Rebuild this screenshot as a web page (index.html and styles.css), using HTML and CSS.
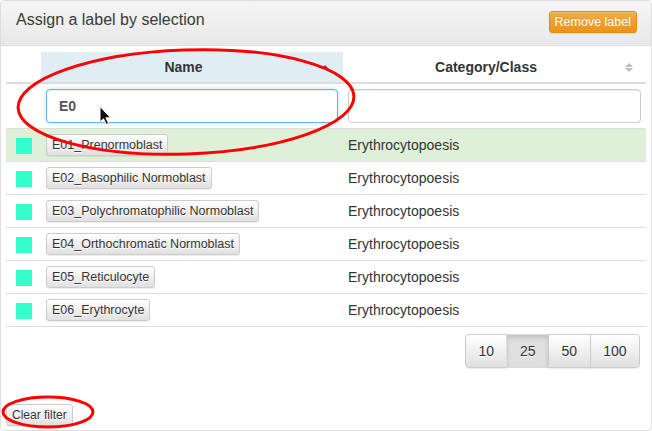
FILE: index.html
```html
<!DOCTYPE html>
<html>
<head>
<meta charset="utf-8">
<link rel="stylesheet" href="styles.css">
</head>
<body>
<div class="panel">
  <div class="panel-heading">
    <h3 class="panel-title">Assign a label by selection</h3>
    <button class="btn btn-xs btn-warning">Remove label</button>
  </div>
  <div class="panel-body">
    <table class="labels">
      <colgroup>
        <col class="w-color">
        <col class="w-name">
        <col class="w-cat">
      </colgroup>
      <thead>
        <tr class="head-row">
          <th class="col-color"></th>
          <th class="col-name sorted">Name<span class="sort-up"></span></th>
          <th class="col-cat">Category/Class<span class="sort-both"><i class="up"></i><i class="down"></i></span></th>
        </tr>
        <tr class="filter-row">
          <td></td>
          <td><input class="form-control focused" type="text" value="E0"></td>
          <td><input class="form-control" type="text" value=""></td>
        </tr>
      </thead>
      <tbody>
        <tr class="success"><td class="cc"><span class="swatch"></span></td><td><button class="btn btn-xs btn-default lbl">E01_Prenormoblast</button></td><td>Erythrocytopoesis</td></tr>
        <tr><td class="cc"><span class="swatch"></span></td><td><button class="btn btn-xs btn-default lbl">E02_Basophilic Normoblast</button></td><td>Erythrocytopoesis</td></tr>
        <tr><td class="cc"><span class="swatch"></span></td><td><button class="btn btn-xs btn-default lbl">E03_Polychromatophilic Normoblast</button></td><td>Erythrocytopoesis</td></tr>
        <tr><td class="cc"><span class="swatch"></span></td><td><button class="btn btn-xs btn-default lbl">E04_Orthochromatic Normoblast</button></td><td>Erythrocytopoesis</td></tr>
        <tr><td class="cc"><span class="swatch"></span></td><td><button class="btn btn-xs btn-default lbl">E05_Reticulocyte</button></td><td>Erythrocytopoesis</td></tr>
        <tr><td class="cc"><span class="swatch"></span></td><td><button class="btn btn-xs btn-default lbl">E06_Erythrocyte</button></td><td>Erythrocytopoesis</td></tr>
      </tbody>
    </table>
    <div class="pager-wrap">
      <div class="btn-group">
        <button class="btn btn-default">10</button><button class="btn btn-default active">25</button><button class="btn btn-default">50</button><button class="btn btn-default">100</button>
      </div>
    </div>
    <div class="footer-row">
      <button class="btn btn-xs btn-default">Clear filter</button>
    </div>
  </div>
</div>
<svg class="overlay" width="652" height="431" viewBox="0 0 652 431">
  <ellipse cx="186" cy="102" rx="168" ry="52" fill="none" stroke="#ff0000" stroke-width="3" transform="rotate(-2 186 102)"/>
  <ellipse cx="48" cy="412" rx="45" ry="15" fill="none" stroke="#ff0000" stroke-width="3"/>
  <path d="M100 106.5 L100 122 L103.5 118.8 L106.3 124.5 L108.6 123.4 L105.9 117.8 L110.6 117.8 Z" fill="#111" stroke="#fff" stroke-width="1" stroke-linejoin="round"/>
</svg>
</body>
</html>
```

FILE: styles.css
```css
html, body {
  margin: 0;
  padding: 0;
  background: #fff;
}
body {
  font-family: "Liberation Sans", Arial, sans-serif;
  font-size: 14px;
  line-height: 20px;
  color: #333;
  width: 652px;
  height: 431px;
  position: relative;
  overflow: hidden;
}
.panel {
  box-sizing: border-box;
  width: 652px;
  height: 431px;
  border: 1px solid #ddd;
  border-radius: 4px;
  display: flex;
  flex-direction: column;
}
.panel-heading {
  display: flex;
  justify-content: space-between;
  align-items: flex-start;
  padding: 10px 14px 10px 15px;
  height: 24px;
  background: linear-gradient(#f5f5f5, #e8e8e8);
  border-bottom: 1px solid #ddd;
  border-radius: 3px 3px 0 0;
}
.panel-title {
  margin: 0;
  font-size: 16px;
  font-weight: normal;
  line-height: 18px;
  color: #3a3a3a;
}
.panel-body {
  flex: 1;
  display: flex;
  flex-direction: column;
  padding: 6px 5px 4px 5px;
}
.btn {
  font-family: "Liberation Sans", Arial, sans-serif;
  display: inline-block;
  border: 1px solid #ccc;
  border-radius: 4px;
  cursor: pointer;
  margin: 0;
}
.btn-xs {
  font-size: 12px;
  line-height: 18px;
  padding: 1px 5px;
  border-radius: 3px;
  height: 22px;
}
.btn-xs.lbl {
  font-size: 12.5px;
}
.btn-warning {
  font-size: 12.5px;
  color: #fff;
  background: linear-gradient(#f0ad4e, #eb9316);
  border-color: #e38d13;
  box-shadow: inset 0 1px 0 rgba(255,255,255,.15), 0 1px 1px rgba(0,0,0,.075);
  text-shadow: 0 -1px 0 rgba(0,0,0,.1);
}
.btn-default {
  color: #333;
  background: linear-gradient(#fff, #e0e0e0);
  border-color: #ccc;
  box-shadow: inset 0 1px 0 rgba(255,255,255,.15), 0 1px 1px rgba(0,0,0,.075);
  text-shadow: 0 1px 0 #fff;
}
.labels {
  width: 640px;
  border-collapse: collapse;
  table-layout: fixed;
}
.w-color { width: 35px; }
.w-name { width: 302px; }
.w-cat { width: 303px; }
.labels th, .labels td {
  padding: 5px;
  text-align: left;
  vertical-align: middle;
}
.head-row th {
  position: relative;
  font-weight: bold;
  text-align: center;
  padding: 5px 22px 5px 5px;
  border-bottom: 2px solid #ddd;
}
.head-row th.col-color { padding: 5px; }
.head-row th.sorted {
  background: #e1edf5;
}
.sort-up {
  position: absolute;
  right: 14px;
  top: 13px;
  width: 0;
  height: 0;
  border-left: 4px solid transparent;
  border-right: 4px solid transparent;
  border-bottom: 4px solid #555;
}
.sort-both {
  position: absolute;
  right: 13px;
  top: 11px;
  width: 8px;
  height: 10px;
}
.sort-both i {
  display: block;
  width: 0;
  height: 0;
  border-left: 4px solid transparent;
  border-right: 4px solid transparent;
}
.sort-both .up { border-bottom: 4px solid #bbb; margin-bottom: 1px; }
.sort-both .down { border-top: 4px solid #bbb; }
.filter-row td {
  border-bottom: 1px solid #ddd;
}
.form-control {
  box-sizing: border-box;
  width: 100%;
  height: 34px;
  padding: 6px 12px;
  font-family: "Liberation Sans", Arial, sans-serif;
  font-size: 14px;
  font-weight: bold;
  color: #555;
  border: 1px solid #ccc;
  border-radius: 4px;
  box-shadow: inset 0 1px 1px rgba(0,0,0,.075);
  outline: none;
  display: block;
}
.form-control.focused {
  border-color: #66afe9;
  box-shadow: inset 0 1px 1px rgba(0,0,0,.075), 0 0 5px rgba(102,175,233,.4);
}
tbody td {
  border-bottom: 1px solid #ddd;
  height: 22px;
}
tbody tr.success td {
  background: #dff0d8;
}
.labels td.cc { text-align: left; padding-left: 10px; }
.swatch {
  display: inline-block;
  width: 16px;
  height: 16px;
  background: #33ffcc;
  vertical-align: middle;
}
.pager-wrap {
  display: flex;
  justify-content: flex-end;
  padding: 7px 6px 0 0;
}
.btn-group {
  display: flex;
}
.btn-group .btn {
  font-size: 14px;
  line-height: 20px;
  padding: 6px 12.5px;
  height: 34px;
  border-radius: 0;
  margin-left: -1px;
  color: #333;
}
.btn-group .btn:first-child { border-radius: 4px 0 0 4px; margin-left: 0; }
.btn-group .btn:last-child { border-radius: 0 4px 4px 0; }
.btn-group .btn.active {
  background: #e0e0e0;
  border-color: #dbdbdb;
  box-shadow: inset 0 3px 5px rgba(0,0,0,.125);
}
.footer-row {
  margin-top: auto;
  display: flex;
}
.overlay {
  position: absolute;
  left: 0;
  top: 0;
  pointer-events: none;
}
```
